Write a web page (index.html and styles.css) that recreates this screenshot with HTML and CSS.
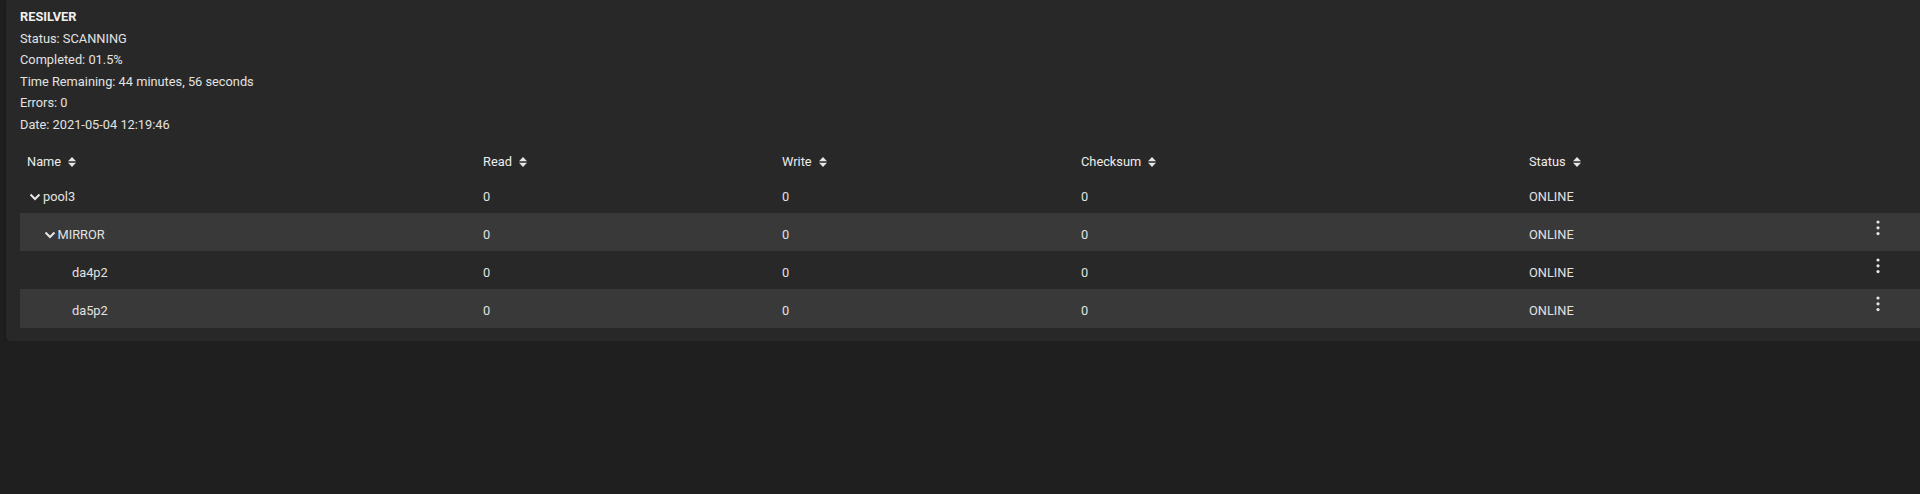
FILE: index.html
```html
<!DOCTYPE html>
<html lang="en">
<head>
    <meta charset="UTF-8">
    <meta name="viewport" content="width=device-width, initial-scale=1.0">
    <title>Pool Status</title>
    <link rel="stylesheet" href="styles.css">
</head>
<body>
    <div class="card">
        <div class="scan-info">
            <div class="scan-title">RESILVER</div>
            <div>Status: SCANNING</div>
            <div>Completed: 01.5%</div>
            <div>Time Remaining: 44 minutes, 56 seconds</div>
            <div>Errors: 0</div>
            <div>Date: 2021-05-04 12:19:46</div>
        </div>

        <div class="tree-table">
            <div class="row head">
                <div class="cell">Name <svg class="sort" viewBox="0 0 8 10"><path d="M0 4.2 L4 0 L8 4.2 Z M0 5.8 L8 5.8 L4 10 Z"/></svg></div>
                <div class="cell">Read <svg class="sort" viewBox="0 0 8 10"><path d="M0 4.2 L4 0 L8 4.2 Z M0 5.8 L8 5.8 L4 10 Z"/></svg></div>
                <div class="cell">Write <svg class="sort" viewBox="0 0 8 10"><path d="M0 4.2 L4 0 L8 4.2 Z M0 5.8 L8 5.8 L4 10 Z"/></svg></div>
                <div class="cell">Checksum <svg class="sort" viewBox="0 0 8 10"><path d="M0 4.2 L4 0 L8 4.2 Z M0 5.8 L8 5.8 L4 10 Z"/></svg></div>
                <div class="cell">Status <svg class="sort" viewBox="0 0 8 10"><path d="M0 4.2 L4 0 L8 4.2 Z M0 5.8 L8 5.8 L4 10 Z"/></svg></div>
                <div class="cell"></div>
                <div class="cell"></div>
            </div>

            <div class="row">
                <div class="cell name level-0">
                    <svg class="chevron" viewBox="0 0 16 8"><polyline points="3.5,1.5 8,6 12.5,1.5"/></svg>pool3
                </div>
                <div class="cell">0</div>
                <div class="cell">0</div>
                <div class="cell">0</div>
                <div class="cell">ONLINE</div>
                <div class="cell"></div>
                <div class="cell"></div>
            </div>

            <div class="row striped">
                <div class="cell name level-1">
                    <svg class="chevron" viewBox="0 0 16 8"><polyline points="3.5,1.5 8,6 12.5,1.5"/></svg>MIRROR
                </div>
                <div class="cell">0</div>
                <div class="cell">0</div>
                <div class="cell">0</div>
                <div class="cell">ONLINE</div>
                <div class="cell actions"><svg class="kebab" viewBox="0 0 4 16"><circle cx="2" cy="2" r="1.6"/><circle cx="2" cy="7.8" r="1.6"/><circle cx="2" cy="13.6" r="1.6"/></svg></div>
                <div class="cell"></div>
            </div>

            <div class="row">
                <div class="cell name level-2">da4p2</div>
                <div class="cell">0</div>
                <div class="cell">0</div>
                <div class="cell">0</div>
                <div class="cell">ONLINE</div>
                <div class="cell actions"><svg class="kebab" viewBox="0 0 4 16"><circle cx="2" cy="2" r="1.6"/><circle cx="2" cy="7.8" r="1.6"/><circle cx="2" cy="13.6" r="1.6"/></svg></div>
                <div class="cell"></div>
            </div>

            <div class="row striped">
                <div class="cell name level-2">da5p2</div>
                <div class="cell">0</div>
                <div class="cell">0</div>
                <div class="cell">0</div>
                <div class="cell">ONLINE</div>
                <div class="cell actions"><svg class="kebab" viewBox="0 0 4 16"><circle cx="2" cy="2" r="1.6"/><circle cx="2" cy="7.8" r="1.6"/><circle cx="2" cy="13.6" r="1.6"/></svg></div>
                <div class="cell"></div>
            </div>
        </div>
    </div>
</body>
</html>
```

FILE: styles.css
```css
*{
    box-sizing: border-box;
    margin: 0;
    padding: 0;
}
body{
    background-color: #1f1f1f;
    color: #e2e2e2;
    font-family: Roboto, "Liberation Sans", sans-serif;
    font-size: 12.8px;
    overflow: hidden;
}
.card{
    width: calc(100% + 40px);
    margin-left: 6px;
    padding: 6px 0 13px 14px;
    background-color: #282828;
    border-radius: 0 0 4px 4px;
    box-shadow: 0 2px 3px rgba(0, 0, 0, .45);
}
.scan-info{
    line-height: 21.5px;
}
.scan-title{
    font-weight: 700;
    color: #f0f0f0;
}
.row{
    display: grid;
    grid-template-columns: 456px 299px 299px 448px 344px 24px 1fr;
    height: 38.3px;
}
.row.striped{
    background-color: #393939;
}
.row.head{
    height: 39.5px;
    color: #ececec;
}
.cell{
    display: flex;
    align-items: flex-start;
    padding: 11px 0 0 7px;
    line-height: 21.5px;
    white-space: nowrap;
}
.head .cell{
    padding-top: 16px;
}
.sort{
    width: 8px;
    height: 10px;
    margin: 5.5px 0 0 7px;
    fill: #e6e6e6;
}
.chevron{
    width: 16px;
    height: 8px;
    margin-top: 7px;
    fill: none;
    stroke: #e6e6e6;
    stroke-width: 2;
}
.level-1{
    padding-left: 21.5px;
}
.level-2{
    padding-left: 52px;
}
.actions{
    padding: 7px 0 0 0;
    justify-content: center;
}
.kebab{
    width: 4px;
    height: 16px;
    fill: #e6e6e6;
}
```
